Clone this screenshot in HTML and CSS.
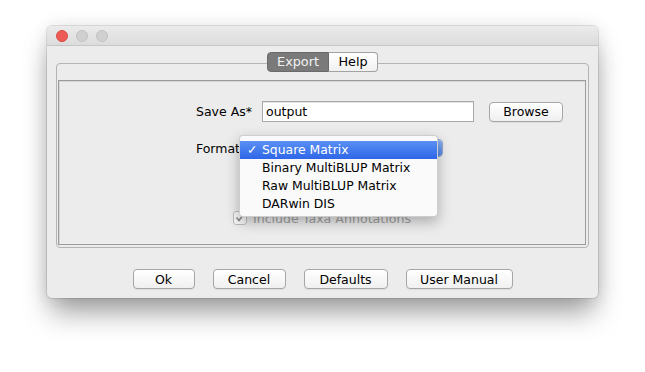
FILE: index.html
```html
<!DOCTYPE html>
<html lang="en">
<head>
    <meta charset="UTF-8">
    <title>Export</title>
    <link rel="stylesheet" href="styles.css">
</head>
<body>
    <div class="window">
        <div class="titlebar">
            <span class="light close"></span>
            <span class="light"></span>
            <span class="light"></span>
        </div>

        <div class="window-body">
            <div class="tabs">
                <span class="tab active">Export</span>
                <span class="tab">Help</span>
            </div>

            <div class="pane">
                <div class="panel">
                    <div class="row row-save">
                        <label class="lbl">Save As*</label>
                        <input class="field" type="text" value="output">
                        <button class="btn browse">Browse</button>
                    </div>

                    <div class="row row-format">
                        <label class="lbl">Format</label>
                        <div class="combo">
                            <span class="combo-arrows"></span>
                            <ul class="popup">
                                <li class="item selected"><span class="tick">✓</span>Square Matrix</li>
                                <li class="item">Binary MultiBLUP Matrix</li>
                                <li class="item">Raw MultiBLUP Matrix</li>
                                <li class="item">DARwin DIS</li>
                            </ul>
                        </div>
                    </div>

                    <div class="row row-check">
                        <span class="check">
                            <svg width="10" height="10" viewBox="0 0 10 10">
                                <path d="M1.5 4.5 L4 7.5 L8.5 1.5" fill="none" stroke="#8a8a8a" stroke-width="1.6"/>
                            </svg>
                        </span>
                        <span class="check-text">Include Taxa Annotations</span>
                    </div>
                </div>
            </div>

            <div class="actions">
                <button class="btn ok">Ok</button>
                <button class="btn cancel">Cancel</button>
                <button class="btn defaults">Defaults</button>
                <button class="btn manual">User Manual</button>
            </div>
        </div>
    </div>
</body>
</html>
```

FILE: styles.css
```css
* {
    box-sizing: border-box;
}

html {
    background: #ffffff;
}

body {
    margin: 0;
    padding: 26px 0 60px 47px;
    font-family: 'DejaVu Sans', sans-serif;
    font-size: 12px;
    color: #000;
}

.window {
    width: 551px;
    height: 272px;
    background: #ececec;
    border-radius: 5px;
    box-shadow: 0 0 0 1px rgba(0, 0, 0, 0.1), 0 18px 28px -4px rgba(0, 0, 0, 0.38), 0 0 18px rgba(0, 0, 0, 0.1);
    display: flex;
    flex-direction: column;
}

.titlebar {
    height: 20px;
    display: flex;
    align-items: center;
    gap: 8px;
    padding-left: 9px;
    background: linear-gradient(#ebebeb, #dcdcdc);
    border-bottom: 1px solid #c6c6c6;
    border-radius: 5px 5px 0 0;
}

.light {
    width: 12px;
    height: 12px;
    border-radius: 50%;
    background: #d0d0d0;
    border: 1px solid #c2c2c2;
}

.light.close {
    background: #ee5a55;
    border-color: #d84a45;
}

.window-body {
    padding: 6px 9px 0;
    display: flex;
    flex-direction: column;
}

/* tabs sit on top of the pane border */
.tabs {
    display: flex;
    justify-content: center;
    margin-bottom: -9px;
    position: relative;
    z-index: 1;
}

.tab {
    height: 20px;
    line-height: 18px;
    padding: 0 10px;
    border: 1px solid #a2a2a2;
    background: linear-gradient(#ffffff, #f1f1f1);
    font-size: 12.8px;
}

.tab.active {
    width: 62px;
    text-align: center;
    padding: 0;
    color: #f2f2f2;
    border-color: #6a6a6a;
    border-radius: 4px 0 0 4px;
    background-color: #858585;
    background-image: radial-gradient(rgba(0, 0, 0, 0.18) 0.6px, transparent 0.8px);
    background-size: 2px 2px;
}

.tab:last-child {
    width: 49px;
    text-align: center;
    padding: 0;
    border-left: none;
    border-radius: 0 4px 4px 0;
}

.pane {
    height: 185px;
    border: 1px solid #b4b4b4;
    border-radius: 4px;
    padding: 16px 2px 2px 1px;
}

.panel {
    height: 100%;
    border: 1px solid #9c9c9c;
    box-shadow: inset 1px 1px 0 #d6d6d6;
    padding-top: 20px;
}

.row {
    display: flex;
    align-items: center;
}

.lbl {
    width: 60px;
    text-align: right;
    font-size: 12.5px;
}

.row-save {
    height: 21px;
    padding-left: 133px;
}

.field {
    width: 212px;
    height: 21px;
    margin-left: 10px;
    padding: 0 3px;
    border: 1px solid #a9a9a9;
    box-shadow: inset 0 1px 0 #e2e2e2;
    background: #fff;
    font-family: inherit;
    font-size: 12.5px;
    outline: none;
}

.btn {
    height: 20px;
    padding: 0;
    border: 1px solid #a6a6a6;
    border-radius: 4px;
    background: linear-gradient(#ffffff, #f0f0f0);
    box-shadow: 0 1px 0 rgba(0, 0, 0, 0.06);
    font-family: inherit;
    font-size: 12.5px;
    color: #000;
}

.browse {
    width: 74px;
    margin-left: 15px;
}

.row-format {
    height: 18px;
    margin-top: 17px;
    padding-left: 121px;
}

.combo {
    position: relative;
    width: 200px;
    height: 18px;
    margin-left: 3px;
    border: 1px solid #9aa6c8;
    border-radius: 4px;
    background: #fff;
}

.combo-arrows {
    position: absolute;
    right: 0;
    top: 0;
    bottom: 0;
    width: 16px;
    border-radius: 0 3px 3px 0;
    background: linear-gradient(#8fb4f5, #4f86ea);
}

.popup {
    position: absolute;
    left: -5px;
    top: -5px;
    width: 199px;
    margin: 0;
    padding: 5px 0 3px;
    list-style: none;
    background: #fafafa;
    border: 1px solid rgba(0, 0, 0, 0.18);
    border-radius: 4px;
    box-shadow: 0 5px 14px rgba(0, 0, 0, 0.28);
    z-index: 2;
}

.item {
    height: 18px;
    line-height: 18px;
    padding-left: 22px;
    font-size: 12.4px;
    position: relative;
}

.item.selected {
    color: #fff;
    background: linear-gradient(#5a90f3, #2e66e8);
}

.tick {
    position: absolute;
    left: 7px;
}

.row-check {
    height: 14px;
    margin-top: 54px;
    padding-left: 174px;
}

.check {
    width: 14px;
    height: 14px;
    border: 1px solid #bdbdbd;
    border-radius: 3px;
    background: #f6f6f6;
    display: flex;
    align-items: center;
    justify-content: center;
}

.check-text {
    margin-left: 6px;
    color: #a0a0a0;
    font-size: 12.6px;
}

.actions {
    display: flex;
    justify-content: center;
    gap: 18px;
    margin-top: 21px;
}

.ok { width: 62px; }
.cancel { width: 73px; }
.defaults { width: 84px; }
.manual { width: 107px; }
```
